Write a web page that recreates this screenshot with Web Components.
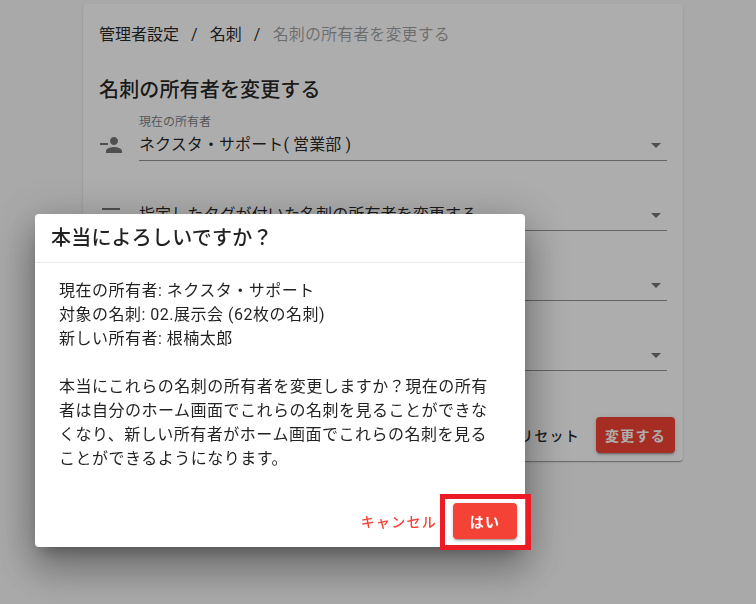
<!DOCTYPE html>
<html lang="ja">
<head>
<meta charset="utf-8">
<title>名刺の所有者を変更する</title>
<style>
  html, body { margin: 0; height: 100%; overflow: hidden; }
  body {
    background: #fafafa;
    color: rgba(0,0,0,.87);
    font-family: Roboto, "Noto Sans CJK JP", sans-serif;
  }
</style>
</head>
<body>
<settings-card>
  <bread-crumbs slot="crumbs"></bread-crumbs>
  <span slot="title">名刺の所有者を変更する</span>
  <select-row label="現在の所有者" value="ネクスタ・サポート( 営業部 )" icon="person"></select-row>
  <select-row value="指定したタグが付いた名刺の所有者を変更する" icon="sort"></select-row>
  <select-row></select-row>
  <select-row></select-row>
  <text-btn slot="actions" color="rgba(0,0,0,.87)">リセット</text-btn>
  <fill-btn slot="actions" wide="79">変更する</fill-btn>
</settings-card>

<confirm-dialog>
  <span slot="title">本当によろしいですか？</span>
  現在の所有者: ネクスタ・サポート<br>
  対象の名刺: 02.展示会 (62枚の名刺)<br>
  新しい所有者: 根楠太郎<br>
  <br>
  本当にこれらの名刺の所有者を変更しますか？現在の所有者は自分のホーム画面でこれらの名刺を見ることができなくなり、新しい所有者がホーム画面でこれらの名刺を見ることができるようになります。
  <text-btn slot="actions" color="#f44336">キャンセル</text-btn>
  <fill-btn slot="actions" wide="64">はい</fill-btn>
</confirm-dialog>

<script>
class BreadCrumbs extends HTMLElement {
  constructor() {
    super();
    this.attachShadow({ mode: 'open' }).innerHTML = `
      <style>
        :host { display: flex; align-items: center; height: 24px; font-size: 16px; line-height: 24px; padding-top: 1px; }
        i { font-style: normal; padding: 0 12px; }
        .off { color: rgba(0,0,0,.38); letter-spacing: .1px; margin-left: .5px; }
      </style>
      <span>管理者設定</span><i>/</i><span>名刺</span><i>/</i><span class="off">名刺の所有者を変更する</span>`;
  }
}
customElements.define('bread-crumbs', BreadCrumbs);

class SelectRow extends HTMLElement {
  constructor() {
    super();
    this.attachShadow({ mode: 'open' });
  }

  connectedCallback() {
    const paths = {
      person: 'M15 12c2.21 0 4-1.79 4-4s-1.79-4-4-4-4 1.79-4 4 1.79 4 4 4zm-6-2H1v2h8v-2zm6 4c-2.67 0-8 1.34-8 4v2h16v-2c0-2.66-5.33-4-8-4z',
      sort: 'M3 5h18v2H3V5zm0 6h12v2H3v-2zm0 6h6v2H3v-2z'
    };
    const icon = paths[this.getAttribute('icon')] || '';
    const label = this.getAttribute('label') || '';
    const value = this.getAttribute('value') || '';
    this.shadowRoot.innerHTML = `
      <style>
        :host { display: flex; gap: 16px; height: 56px; }
        svg { flex: none; width: 24px; height: 24px; margin-top: 28px; fill: rgba(0,0,0,.54); }
        .field {
          flex: 1;
          position: relative;
          border-bottom: 1px solid rgba(0,0,0,.42);
          box-sizing: border-box;
        }
        .label { position: absolute; left: 0; top: 10px; font-size: 12px; line-height: 15px; color: rgba(0,0,0,.54); }
        .value { position: absolute; left: 0; top: 28px; font-size: 16px; line-height: 24px; letter-spacing: .1px; }
        .arrow {
          position: absolute; right: 6px; top: 38px;
          border: 5px solid transparent; border-top-color: rgba(0,0,0,.54); border-bottom: 0;
        }
      </style>
      <svg viewBox="0 0 24 24"><path d="${icon}"/></svg>
      <div class="field">
        <span class="label">${label}</span>
        <span class="value">${value}</span>
        <span class="arrow"></span>
      </div>`;
  }
}
customElements.define('select-row', SelectRow);

class TextBtn extends HTMLElement {
  constructor() {
    super();
    this.attachShadow({ mode: 'open' });
  }

  connectedCallback() {
    this.shadowRoot.innerHTML = `
      <style>
        :host { display: block; }
        button {
          display: block;
          font: 500 14px Roboto, "Noto Sans CJK JP", sans-serif;
          letter-spacing: 1.25px;
          height: 36px;
          padding: 0 16px;
          border: 0;
          background: none;
          color: ${this.getAttribute('color')};
        }
      </style>
      <button type="button"><slot></slot></button>`;
  }
}
customElements.define('text-btn', TextBtn);

class FillBtn extends HTMLElement {
  constructor() {
    super();
    this.attachShadow({ mode: 'open' });
  }

  connectedCallback() {
    this.shadowRoot.innerHTML = `
      <style>
        :host { display: block; }
        button {
          display: block;
          font: 700 14px Roboto, "Noto Sans CJK JP", sans-serif;
          letter-spacing: 1.25px;
          width: ${this.getAttribute('wide')}px;
          height: 36px;
          padding: 0;
          border: 0;
          border-radius: 4px;
          background: #f44336;
          color: #fff;
          box-shadow: 0 3px 1px -2px rgba(0,0,0,.2), 0 2px 2px 0 rgba(0,0,0,.14), 0 1px 5px 0 rgba(0,0,0,.12);
        }
      </style>
      <button type="button"><slot></slot></button>`;
  }
}
customElements.define('fill-btn', FillBtn);

class SettingsCard extends HTMLElement {
  constructor() {
    super();
    this.attachShadow({ mode: 'open' }).innerHTML = `
      <style>
        :host {
          display: block;
          box-sizing: border-box;
          width: 600px;
          height: 457px;
          margin: 4px 0 0 83px;
          padding: 18px 16px 0;
          background: #fff;
          border-radius: 4px;
          box-shadow: 0 2px 1px -1px rgba(0,0,0,.2), 0 1px 1px 0 rgba(0,0,0,.14), 0 1px 3px 0 rgba(0,0,0,.12);
        }
        h2 { margin: 26px 0 0; height: 32px; font-size: 20px; line-height: 34px; font-weight: 500; letter-spacing: .15px; }
        .rows { display: flex; flex-direction: column; gap: 14px; }
        .actions { display: flex; justify-content: flex-end; margin: 46px -8px 0 0; }
      </style>
      <slot name="crumbs"></slot>
      <h2><slot name="title"></slot></h2>
      <div class="rows"><slot></slot></div>
      <div class="actions"><slot name="actions"></slot></div>`;
  }
}
customElements.define('settings-card', SettingsCard);

class ConfirmDialog extends HTMLElement {
  constructor() {
    super();
    this.attachShadow({ mode: 'open' }).innerHTML = `
      <style>
        :host { display: block; position: fixed; inset: 0; background: rgba(0,0,0,.32); }
        .box {
          position: absolute; left: 35px; top: 214px; width: 490px;
          background: #fff;
          border-radius: 4px;
          box-shadow: 0 11px 15px -7px rgba(0,0,0,.3), 0 24px 38px 3px rgba(0,0,0,.2), 0 9px 46px 8px rgba(0,0,0,.2);
        }
        header {
          height: 48px;
          padding-left: 16px;
          font-size: 20px;
          line-height: 48px;
          font-weight: 500;
          letter-spacing: .2px;
          border-bottom: 1px solid rgba(0,0,0,.08);
        }
        .body { padding: 16px 32px 0 24px; font-size: 16px; line-height: 24px; letter-spacing: .5px; }
        footer { display: flex; justify-content: flex-end; align-items: center; padding: 32px 8px 8px; }
        .mark {
          position: absolute; left: 405px; top: 280px; width: 81px; height: 46px;
          border: 5px solid #ed1c24;
        }
      </style>
      <div class="box">
        <header><slot name="title"></slot></header>
        <div class="body"><slot></slot></div>
        <footer><slot name="actions"></slot></footer>
        <div class="mark"></div>
      </div>`;
  }
}
customElements.define('confirm-dialog', ConfirmDialog);
</script>
</body>
</html>
